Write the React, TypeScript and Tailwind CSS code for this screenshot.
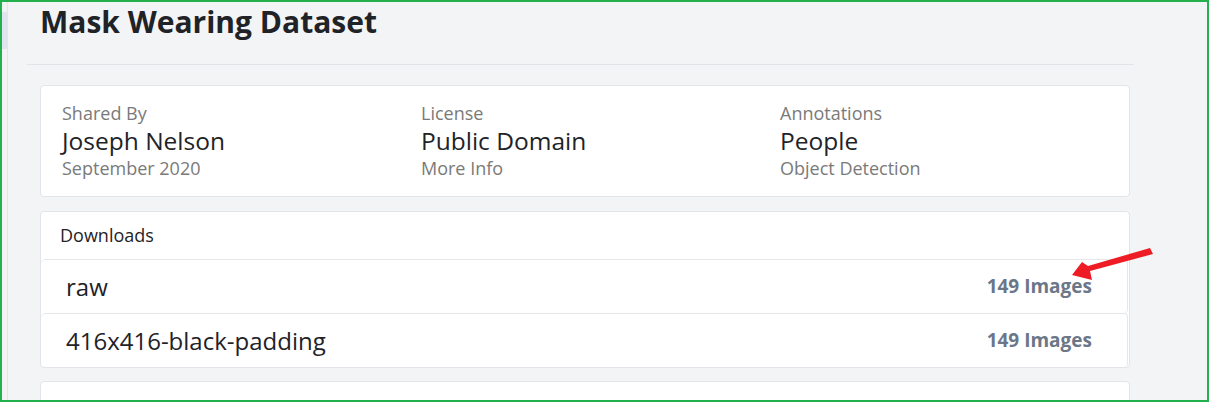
import React from "react";

const font = { fontFamily: '"Open Sans", "Noto Sans", sans-serif' };

function Info({ label, value, sub }: { label: string; value: string; sub: string }) {
  return (
    <div className="flex flex-col">
      <div className="text-[18px] leading-[24px] text-[#7a7a7a]">{label}</div>
      <div className="text-[24.5px] leading-[31px] text-[#1f2328]">{value}</div>
      <div className="text-[18px] leading-[24px] text-[#7a7a7a]">{sub}</div>
    </div>
  );
}

function Row({ name, count }: { name: string; count: string }) {
  return (
    <div className="h-[54px] shrink-0 border-t border-r border-[#e5e7eb] rounded-t-[5px] rounded-r-[4px] mr-[1px] flex items-center justify-between pl-[25px] pr-[35px]">
      <span className="text-[24px] text-[#1f2328]">{name}</span>
      <span className="text-[19px] font-bold text-[#6b7789]">{count}</span>
    </div>
  );
}

export default function App() {
  return (
    <div
      className="relative w-[1209px] h-[402px] overflow-hidden border-2 border-[#22b14c] bg-[#f3f4f6] flex"
      style={font}
    >
      <div className="w-[6px] shrink-0 border-r border-[#e3e5ea] bg-[#f2f3f5] flex flex-col">
        <div className="mt-[10px] h-[37px] bg-[#dfe4ef]" />
      </div>
      <div className="flex flex-col pl-[19px] w-[1126px]">
        <h1 className="shrink-0 ml-[13px] h-[62px] text-[30px] leading-[40px] font-bold text-[#1f2328]">
          Mask Wearing Dataset
        </h1>
        <div className="shrink-0 h-px bg-[#e1e4e8]" />
        <div className="shrink-0 ml-[13px] w-[1090px] mt-[20px] flex flex-col gap-[14px]">
          <div className="shrink-0 h-[112px] bg-white border border-[#e1e4e8] rounded-[4px] grid grid-cols-[359px_359px_1fr] pl-[21px] pt-[15px]">
            <Info label="Shared By" value="Joseph Nelson" sub="September 2020" />
            <Info label="License" value="Public Domain" sub="More Info" />
            <Info label="Annotations" value="People" sub="Object Detection" />
          </div>
          <div className="shrink-0 h-[157px] bg-white border border-[#e1e4e8] rounded-[4px] flex flex-col">
            <div className="h-[47px] shrink-0 flex items-center pl-[19px] text-[18px] text-[#1f2328]">Downloads</div>
            <Row name="raw" count="149 Images" />
            <Row name="416x416-black-padding" count="149 Images" />
          </div>
          <div className="shrink-0 h-[40px] -mt-[1px] bg-white border border-[#e1e4e8] rounded-[4px]" />
        </div>
      </div>
      <svg className="absolute left-0 top-0 pointer-events-none" width="1209" height="402">
        <polygon points="1148,246 1151,252 1088,269 1090,278 1070,273 1080,260 1086,264" fill="#ee1c24" />
      </svg>
    </div>
  );
}
